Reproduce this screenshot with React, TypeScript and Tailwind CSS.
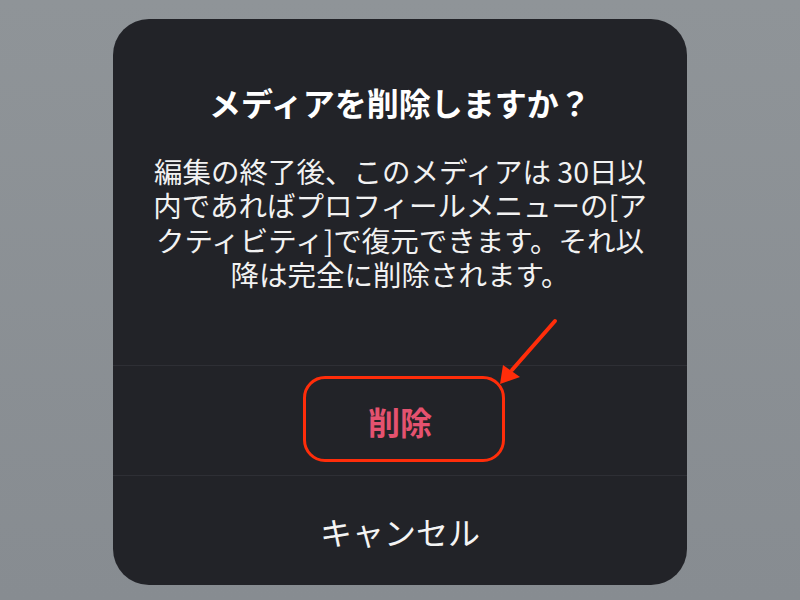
import React from 'react';

const jp = { fontFamily: '"Noto Sans CJK JP", "Noto Sans", sans-serif' };

const bodyLines = [
  '編集の終了後、このメディアは 30日以',
  '内であればプロフィールメニューの[ア',
  'クティビティ]で復元できます。それ以',
  '降は完全に削除されます。',
];

export default function App() {
  return (
    <div
      className="relative h-[600px] w-[800px] overflow-hidden bg-gradient-to-b from-[#8f9498] to-[#878c91] pt-[19px]"
      style={jp}
    >
      {/* Alert sheet */}
      <div className="mx-auto flex h-[566px] w-[574px] flex-col overflow-hidden rounded-[36px] bg-[#222328] text-white">
        <div className="flex h-[346px] flex-col items-center pt-[63px]">
          <h2 className="text-[32px] font-bold leading-[40px]">メディアを削除しますか？</h2>
          <p className="mt-[32px] text-center text-[28.5px] leading-[34.3px] text-[#f2f2f2]">
            {bodyLines.map((line) => (
              <span key={line} className="block">
                {line}
              </span>
            ))}
          </p>
        </div>
        <div className="h-px bg-[#2e2f35]" />
        <button className="flex h-[109px] items-center justify-center text-[32px] font-bold text-[#e5526f]">
          削除
        </button>
        <div className="h-px bg-[#2e2f35]" />
        <button className="flex h-[109px] items-center justify-center text-[32px] text-[#f4f4f4]">
          キャンセル
        </button>
      </div>

      {/* Callout around the delete action */}
      <div className="absolute left-[303px] top-[376px] h-[86px] w-[202px] rounded-[22px] border-[3.5px] border-[#ff2d0a]" />
      <svg className="absolute left-[490px] top-[310px]" width="80" height="90" viewBox="0 0 80 90">
        <line x1="65" y1="11" x2="22" y2="60" stroke="#ff2d0a" strokeWidth="4" strokeLinecap="round" />
        <polygon points="10,74 13,55 30,67" fill="#ff2d0a" />
      </svg>
    </div>
  );
}
